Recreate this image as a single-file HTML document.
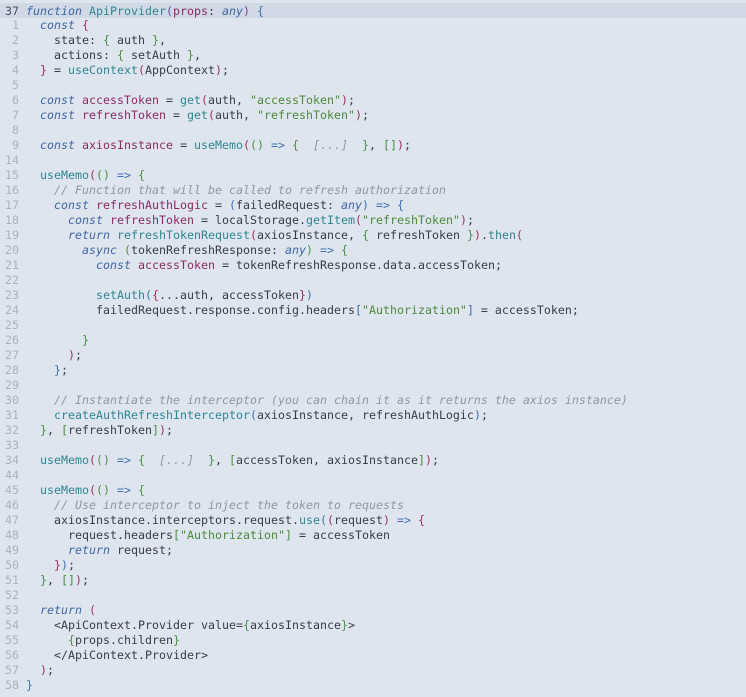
<!DOCTYPE html>
<html><head><meta charset="utf-8"><style>
html,body{margin:0;padding:0;background:#dfe5ee;width:746px;height:697px;overflow:hidden}
.code{margin:0;padding-top:4px;font-family:"DejaVu Sans Mono","Liberation Mono",monospace;font-size:11.63px;line-height:15px;color:#363d47}
.l{display:block;padding-left:5px;height:15px;white-space:pre}
.hl{background:#d0d9e5;margin-top:-1px;padding-top:1px;height:14px}
.n{color:#a9b2bf}
.hl .n{color:#4a5260}
.k{color:#3f66a3;font-style:italic}
.f{color:#2f8593}
.v{color:#8c2b63}
.s{color:#4b8a3a}
.c{color:#8f97a3;font-style:italic}
.p{color:#7a3f9a}
.b{color:#3f6fb0}
.m{color:#a0305e}
.g{color:#4b8f45}
.o{color:#3f6fb0}
</style></head><body><div class="code">
<span class="l hl"><span class="n">37</span> <span class="k">function</span> <span class="f">ApiProvider</span><span class="p">(</span><span class="v">props</span>: <span class="k">any</span><span class="p">)</span> <span class="b">{</span></span>
<span class="l"><span class="n"> 1</span>   <span class="k">const</span> <span class="m">{</span></span>
<span class="l"><span class="n"> 2</span>     state: <span class="g">{</span> auth <span class="g">}</span>,</span>
<span class="l"><span class="n"> 3</span>     actions: <span class="g">{</span> setAuth <span class="g">}</span>,</span>
<span class="l"><span class="n"> 4</span>   <span class="m">}</span> = <span class="f">useContext</span><span class="m">(</span>AppContext<span class="m">)</span>;</span>
<span class="l"><span class="n"> 5</span></span>
<span class="l"><span class="n"> 6</span>   <span class="k">const</span> <span class="v">accessToken</span> = <span class="f">get</span><span class="m">(</span>auth, <span class="s">"accessToken"</span><span class="m">)</span>;</span>
<span class="l"><span class="n"> 7</span>   <span class="k">const</span> <span class="v">refreshToken</span> = <span class="f">get</span><span class="m">(</span>auth, <span class="s">"refreshToken"</span><span class="m">)</span>;</span>
<span class="l"><span class="n"> 8</span></span>
<span class="l"><span class="n"> 9</span>   <span class="k">const</span> <span class="v">axiosInstance</span> = <span class="f">useMemo</span><span class="m">(</span><span class="g">()</span> <span class="o">=&gt;</span> <span class="g">{</span>  <span class="c">[...]</span>  <span class="g">}</span>, <span class="g">[]</span><span class="m">)</span>;</span>
<span class="l"><span class="n">14</span></span>
<span class="l"><span class="n">15</span>   <span class="f">useMemo</span><span class="m">(</span><span class="g">()</span> <span class="o">=&gt;</span> <span class="g">{</span></span>
<span class="l"><span class="n">16</span>     <span class="c">// Function that will be called to refresh authorization</span></span>
<span class="l"><span class="n">17</span>     <span class="k">const</span> <span class="v">refreshAuthLogic</span> = <span class="b">(</span>failedRequest: <span class="k">any</span><span class="b">)</span> <span class="o">=&gt;</span> <span class="b">{</span></span>
<span class="l"><span class="n">18</span>       <span class="k">const</span> <span class="v">refreshToken</span> = localStorage.<span class="f">getItem</span><span class="m">(</span><span class="s">"refreshToken"</span><span class="m">)</span>;</span>
<span class="l"><span class="n">19</span>       <span class="k">return</span> <span class="f">refreshTokenRequest</span><span class="m">(</span>axiosInstance, <span class="g">{</span> refreshToken <span class="g">}</span><span class="m">)</span>.<span class="f">then</span><span class="m">(</span></span>
<span class="l"><span class="n">20</span>         <span class="k">async</span> <span class="g">(</span>tokenRefreshResponse: <span class="k">any</span><span class="g">)</span> <span class="o">=&gt;</span> <span class="g">{</span></span>
<span class="l"><span class="n">21</span>           <span class="k">const</span> <span class="v">accessToken</span> = tokenRefreshResponse.data.accessToken;</span>
<span class="l"><span class="n">22</span></span>
<span class="l"><span class="n">23</span>           <span class="f">setAuth</span><span class="b">(</span><span class="m">{</span>...auth, accessToken<span class="m">}</span><span class="b">)</span></span>
<span class="l"><span class="n">24</span>           failedRequest.response.config.headers<span class="b">[</span><span class="s">"Authorization"</span><span class="b">]</span> = accessToken;</span>
<span class="l"><span class="n">25</span></span>
<span class="l"><span class="n">26</span>         <span class="g">}</span></span>
<span class="l"><span class="n">27</span>       <span class="m">)</span>;</span>
<span class="l"><span class="n">28</span>     <span class="b">}</span>;</span>
<span class="l"><span class="n">29</span></span>
<span class="l"><span class="n">30</span>     <span class="c">// Instantiate the interceptor (you can chain it as it returns the axios instance)</span></span>
<span class="l"><span class="n">31</span>     <span class="f">createAuthRefreshInterceptor</span><span class="b">(</span>axiosInstance, refreshAuthLogic<span class="b">)</span>;</span>
<span class="l"><span class="n">32</span>   <span class="g">}</span>, <span class="g">[</span>refreshToken<span class="g">]</span><span class="m">)</span>;</span>
<span class="l"><span class="n">33</span></span>
<span class="l"><span class="n">34</span>   <span class="f">useMemo</span><span class="m">(</span><span class="g">()</span> <span class="o">=&gt;</span> <span class="g">{</span>  <span class="c">[...]</span>  <span class="g">}</span>, <span class="g">[</span>accessToken, axiosInstance<span class="g">]</span><span class="m">)</span>;</span>
<span class="l"><span class="n">44</span></span>
<span class="l"><span class="n">45</span>   <span class="f">useMemo</span><span class="m">(</span><span class="g">()</span> <span class="o">=&gt;</span> <span class="g">{</span></span>
<span class="l"><span class="n">46</span>     <span class="c">// Use interceptor to inject the token to requests</span></span>
<span class="l"><span class="n">47</span>     axiosInstance.interceptors.request.<span class="f">use</span><span class="b">(</span><span class="m">(</span>request<span class="m">)</span> <span class="o">=&gt;</span> <span class="m">{</span></span>
<span class="l"><span class="n">48</span>       request.headers<span class="g">[</span><span class="s">"Authorization"</span><span class="g">]</span> = accessToken</span>
<span class="l"><span class="n">49</span>       <span class="k">return</span> request;</span>
<span class="l"><span class="n">50</span>     <span class="m">}</span><span class="b">)</span>;</span>
<span class="l"><span class="n">51</span>   <span class="g">}</span>, <span class="g">[]</span><span class="m">)</span>;</span>
<span class="l"><span class="n">52</span></span>
<span class="l"><span class="n">53</span>   <span class="k">return</span> <span class="m">(</span></span>
<span class="l"><span class="n">54</span>     &lt;ApiContext.Provider value=<span class="g">{</span>axiosInstance<span class="g">}</span>&gt;</span>
<span class="l"><span class="n">55</span>       <span class="g">{</span>props.children<span class="g">}</span></span>
<span class="l"><span class="n">56</span>     &lt;/ApiContext.Provider&gt;</span>
<span class="l"><span class="n">57</span>   <span class="m">)</span>;</span>
<span class="l"><span class="n">58</span> <span class="b">}</span></span>
</div></body></html>
